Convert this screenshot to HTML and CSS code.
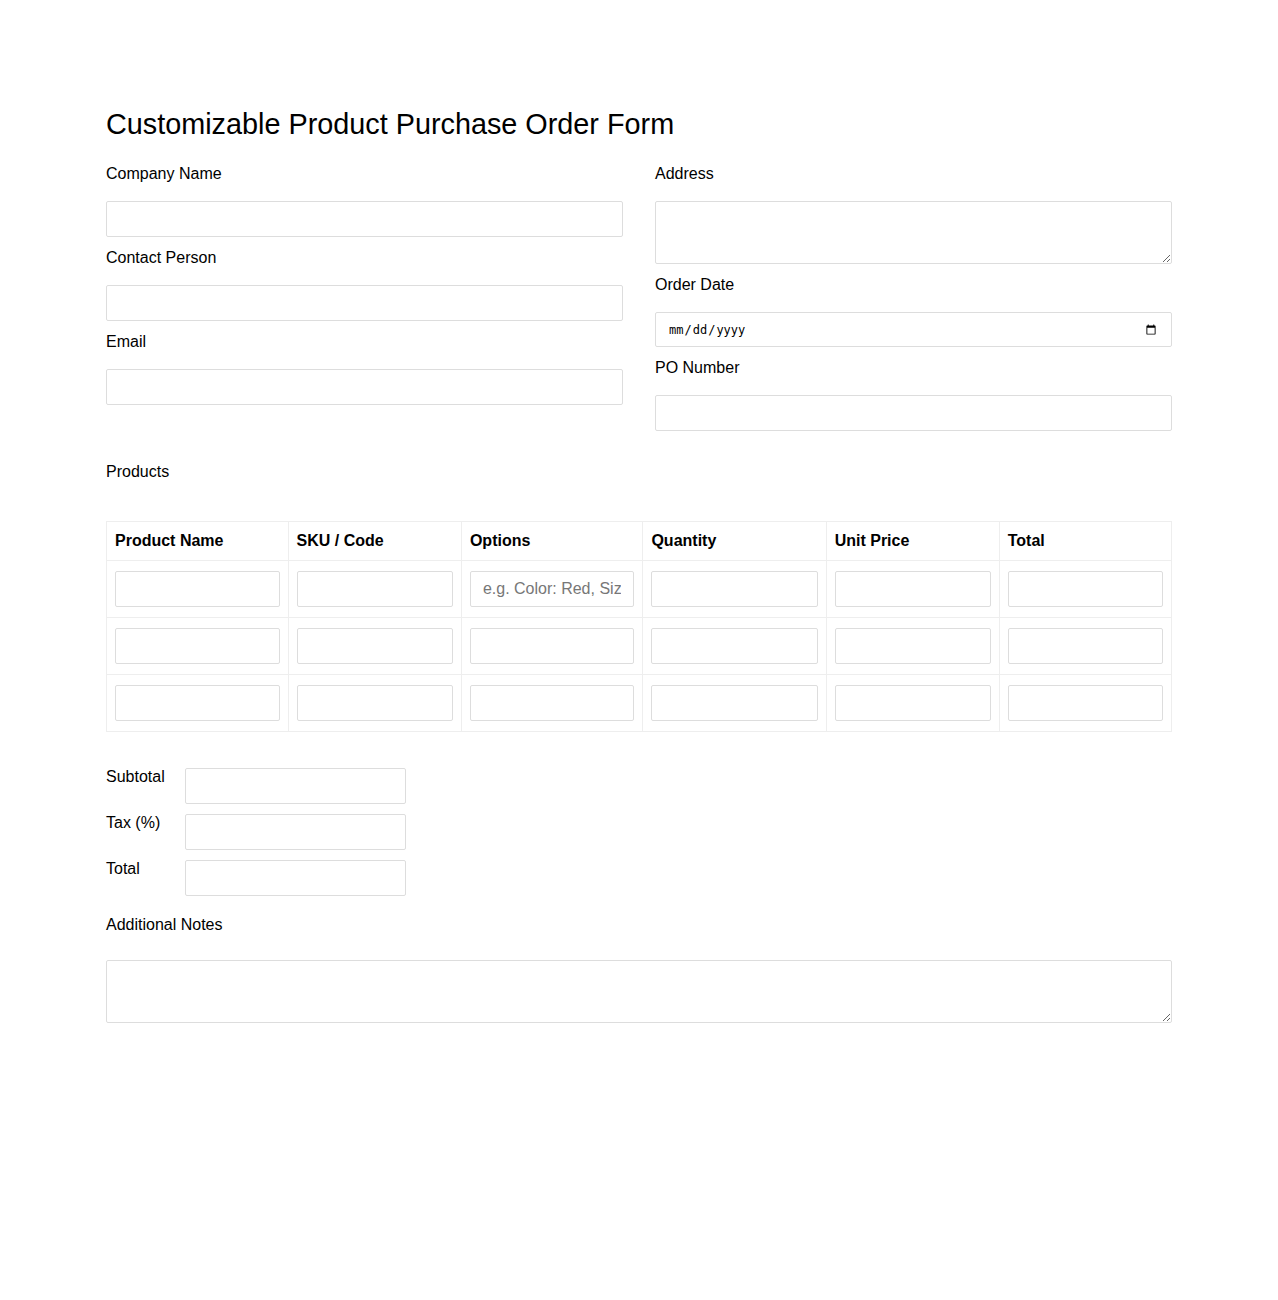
FILE: index.html
```html
<!DOCTYPE html>
<html lang="en">
  <head>
    <meta charset="UTF-8" />
    <meta name="viewport" content="width=device-width, initial-scale=1.0" />
    <title>Customizable Product Purchase Order Form</title>
    <link rel="stylesheet" href="styles.css">
  </head>
  <body>
    <div class="container">
      <h1>Customizable Product Purchase Order Form</h1>

      <!-- Company / Order Details -->
      <div class="form-grid">
        <div class="form-col">
          <label for="company">Company Name</label>
          <input type="text" id="company" />
          <label for="contact">Contact Person</label>
          <input type="text" id="contact" />
          <label for="email">Email</label>
          <input type="email" id="email" />
        </div>
        <div class="form-col">
          <label for="address">Address</label>
          <textarea id="address"></textarea>
          <label for="orderDate">Order Date</label>
          <input type="date" id="orderDate" />
          <label for="poNumber">PO Number</label>
          <input type="text" id="poNumber" />
        </div>
      </div>

      <!-- Products Table -->
      <label class="section-label">Products</label>
      <table class="products-table">
        <thead>
          <tr>
            <th>Product Name</th>
            <th>SKU / Code</th>
            <th>Options</th>
            <th>Quantity</th>
            <th>Unit Price</th>
            <th>Total</th>
          </tr>
        </thead>
        <tbody>
          <tr>
            <td><input type="text" /></td>
            <td><input type="text" /></td>
            <td><input type="text" placeholder="e.g. Color: Red, Size: M" /></td>
            <td><input type="number" /></td>
            <td><input type="number" /></td>
            <td><input type="number" readonly /></td>
          </tr>
          <tr>
            <td><input type="text" /></td>
            <td><input type="text" /></td>
            <td><input type="text" /></td>
            <td><input type="number" /></td>
            <td><input type="number" /></td>
            <td><input type="number" readonly /></td>
          </tr>
          <tr>
            <td><input type="text" /></td>
            <td><input type="text" /></td>
            <td><input type="text" /></td>
            <td><input type="number" /></td>
            <td><input type="number" /></td>
            <td><input type="number" readonly /></td>
          </tr>
        </tbody>
      </table>

      <!-- Totals -->
      <div class="totals">
        <div class="total-row">
          <label for="subtotal">Subtotal</label>
          <input type="number" id="subtotal" readonly />
        </div>
        <div class="total-row">
          <label for="tax">Tax (%)</label>
          <input type="number" id="tax" />
        </div>
        <div class="total-row">
          <label for="grandTotal">Total</label>
          <input type="number" id="grandTotal" readonly />
        </div>
      </div>

      <!-- Notes -->
      <label for="notes" class="notes-label">Additional Notes</label>
      <textarea id="notes" class="notes"></textarea>
    </div>
  </body>
</html>
```

FILE: styles.css
```css
/* Base Styles */
* {
  box-sizing: border-box;
}

body {
  margin: 0;
  font-family: "Liberation Sans", Arial, sans-serif;
  color: #000;
  background: #fff;
}

.container {
  width: 1066px;
  margin: 0 auto;
  padding-top: 108px;
  padding-bottom: 120px;
}

h1 {
  font-size: 28.8px;
  font-weight: normal;
  line-height: 33px;
  margin: 0 0 24px;
}

label {
  display: block;
  font-size: 16px;
  line-height: 18px;
  margin-bottom: 18px;
}

input,
textarea {
  display: block;
  width: 100%;
  height: 36px;
  padding: 8px 12px;
  border: 1px solid #ddd;
  border-radius: 2px;
  font-family: "Liberation Sans", Arial, sans-serif;
  font-size: 16px;
  background: #fff;
}

input::placeholder {
  color: #777;
}

input[type="date"] {
  height: 35px;
  font-family: "DejaVu Sans Mono", monospace;
  font-size: 12px;
}

textarea {
  height: 63px;
  resize: vertical;
  font-family: "DejaVu Sans Mono", monospace;
  font-size: 13px;
}

/* Top Form Grid */
.form-grid {
  display: grid;
  grid-template-columns: 1fr 1fr;
  gap: 32px;
  margin-bottom: 20px;
}

.form-col input,
.form-col textarea {
  margin-bottom: 12px;
}

.section-label {
  margin-bottom: 40px;
}

/* Products Table */
.products-table {
  width: 100%;
  border-collapse: collapse;
}

.products-table th,
.products-table td {
  border: 1px solid #eee;
  padding: 10px 8px;
  text-align: left;
}

.products-table th {
  font-size: 16px;
  line-height: 18px;
  font-weight: bold;
}

/* Totals */
.totals {
  margin-top: 36px;
  display: flex;
  flex-direction: column;
  gap: 10px;
}

.total-row {
  display: flex;
  align-items: flex-start;
}

.total-row label {
  width: 79px;
  margin: 0;
}

.total-row input {
  width: 221px;
}

.notes-label {
  margin-top: 20px;
  margin-bottom: 26px;
}
```
